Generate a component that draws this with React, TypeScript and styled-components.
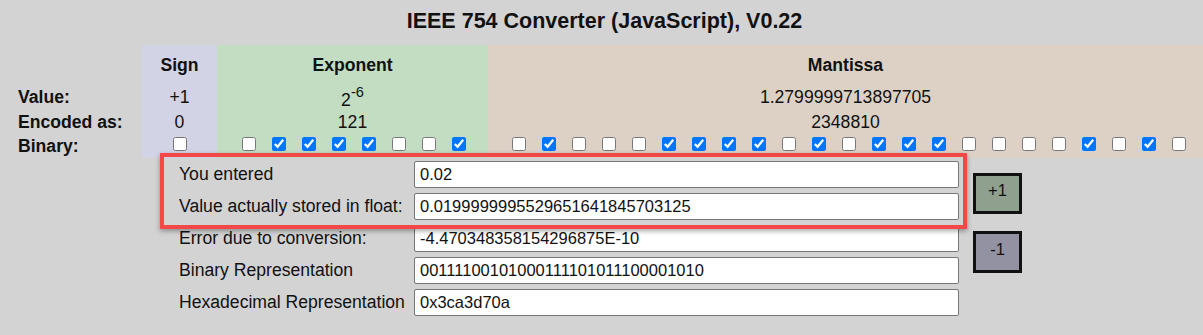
import React from "react";
import styled, { createGlobalStyle } from "styled-components";

const GlobalStyle = createGlobalStyle`
  html, body {
    margin: 0;
    padding: 0;
    background: #d3d3d3;
    font-family: "Liberation Sans", Arial, sans-serif;
    color: #111;
  }
`;

type Tone = "plain" | "sign" | "exp" | "man";

const tones: Record<Tone, string> = {
  plain: "transparent",
  sign: "#d3d3e6",
  exp: "#c2ddc2",
  man: "#ddd1c5",
};

const Page = styled.div`
  width: 1203px;
  height: 335px;
  overflow: hidden;
`;

const Title = styled.h1`
  margin: 0;
  height: 45px;
  line-height: 42px;
  text-align: center;
  font-size: 21.5px;
  font-weight: bold;
  padding-left: 6px;
`;

const BitTable = styled.div`
  display: grid;
  grid-template-columns: 142px 75px 271px 1fr;
  grid-template-rows: 39px 26px 24px 24px;
  font-size: 17.6px;
`;

const Cell = styled.div<{ $tone: Tone; $head?: boolean; $label?: boolean }>`
  background: ${(p) => tones[p.$tone]};
  display: flex;
  align-items: center;
  justify-content: ${(p) => (p.$label ? "flex-start" : "center")};
  padding-left: ${(p) => (p.$label ? "18px" : "0")};
  font-weight: ${(p) => (p.$head || p.$label ? "bold" : "normal")};
  padding-top: ${(p) => (p.$head ? "2px" : "0")};
`;

const BitCell = styled(Cell)<{ $shift?: number }>`
  align-items: flex-start;
  padding-top: 3px;
  padding-left: ${(p) => p.$shift ?? 0}px;
  gap: 16px;
`;

const Power = styled.span`
  position: relative;
  top: 3px;
  sup {
    font-size: 0.83em;
    vertical-align: baseline;
    position: relative;
    top: -0.55em;
  }
`;

const Bit = styled.input.attrs({ type: "checkbox", readOnly: true })`
  width: 14px;
  height: 14px;
  margin: 0;
  accent-color: #0075ff;
`;

const FormArea = styled.div`
  position: relative;
  display: flex;
  padding: 3px 0 0 179px;
`;

const Fields = styled.div`
  display: grid;
  grid-template-columns: 235px 545px;
  row-gap: 5px;
  font-size: 17.6px;
`;

const FieldLabel = styled.div`
  display: flex;
  align-items: center;
  height: 27px;
  white-space: nowrap;
`;

const Field = styled.input.attrs({ readOnly: true })`
  box-sizing: border-box;
  height: 27px;
  width: 545px;
  margin: 0;
  border: 1px solid #767676;
  border-radius: 2px;
  background: #fff;
  padding: 0 5px;
  font-family: "Liberation Sans", Arial, sans-serif;
  font-size: 16.5px;
  color: #111;
  outline: none;
`;

const Buttons = styled.div`
  display: flex;
  flex-direction: column;
  gap: 17px;
  margin: 12px 0 0 14px;
`;

const StepButton = styled.button<{ $bg: string; $h: number }>`
  box-sizing: border-box;
  width: 49px;
  height: ${(p) => p.$h}px;
  border: 3px solid #111;
  background: ${(p) => p.$bg};
  font-family: "Liberation Sans", Arial, sans-serif;
  font-size: 16.5px;
  color: #111;
  padding: 0 0 6px;
`;

const Highlight = styled.div`
  position: absolute;
  left: 160px;
  top: -5px;
  width: 807px;
  height: 76px;
  box-sizing: border-box;
  border: 4px solid #f24848;
  box-shadow: 0 2px 5px rgba(0, 0, 0, 0.35);
  pointer-events: none;
`;

const expBits = "01111001";
const manBits = "01000111101011100001010";

const fields = [
  ["You entered", "0.02"],
  ["Value actually stored in float:", "0.0199999995529651641845703125"],
  ["Error due to conversion:", "-4.470348358154296875E-10"],
  ["Binary Representation", "00111100101000111101011100001010"],
  ["Hexadecimal Representation", "0x3ca3d70a"],
];

const Bits: React.FC<{ bits: string }> = ({ bits }) => (
  <>
    {bits.split("").map((b, i) => (
      <Bit key={i} defaultChecked={b === "1"} />
    ))}
  </>
);

export default function App() {
  return (
    <Page>
      <GlobalStyle />
      <Title>IEEE 754 Converter (JavaScript), V0.22</Title>
      <BitTable>
        <Cell $tone="plain" />
        <Cell $tone="sign" $head>Sign</Cell>
        <Cell $tone="exp" $head>Exponent</Cell>
        <Cell $tone="man" $head>Mantissa</Cell>

        <Cell $tone="plain" $label>Value:</Cell>
        <Cell $tone="sign">+1</Cell>
        <Cell $tone="exp">
          <Power>
            2<sup>-6</sup>
          </Power>
        </Cell>
        <Cell $tone="man">1.2799999713897705</Cell>

        <Cell $tone="plain" $label>Encoded as:</Cell>
        <Cell $tone="sign">0</Cell>
        <Cell $tone="exp">121</Cell>
        <Cell $tone="man">2348810</Cell>

        <Cell $tone="plain" $label>Binary:</Cell>
        <BitCell $tone="sign" $shift={1}>
          <Bits bits="0" />
        </BitCell>
        <BitCell $tone="exp" $shift={2}>
          <Bits bits={expBits} />
        </BitCell>
        <BitCell $tone="man" $shift={6}>
          <Bits bits={manBits} />
        </BitCell>
      </BitTable>

      <FormArea>
        <Fields>
          {fields.map(([label, value]) => (
            <React.Fragment key={label}>
              <FieldLabel>{label}</FieldLabel>
              <Field defaultValue={value} />
            </React.Fragment>
          ))}
        </Fields>
        <Buttons>
          <StepButton $bg="#8fa08f" $h={41}>+1</StepButton>
          <StepButton $bg="#9392a2" $h={42}>-1</StepButton>
        </Buttons>
        <Highlight />
      </FormArea>
    </Page>
  );
}
